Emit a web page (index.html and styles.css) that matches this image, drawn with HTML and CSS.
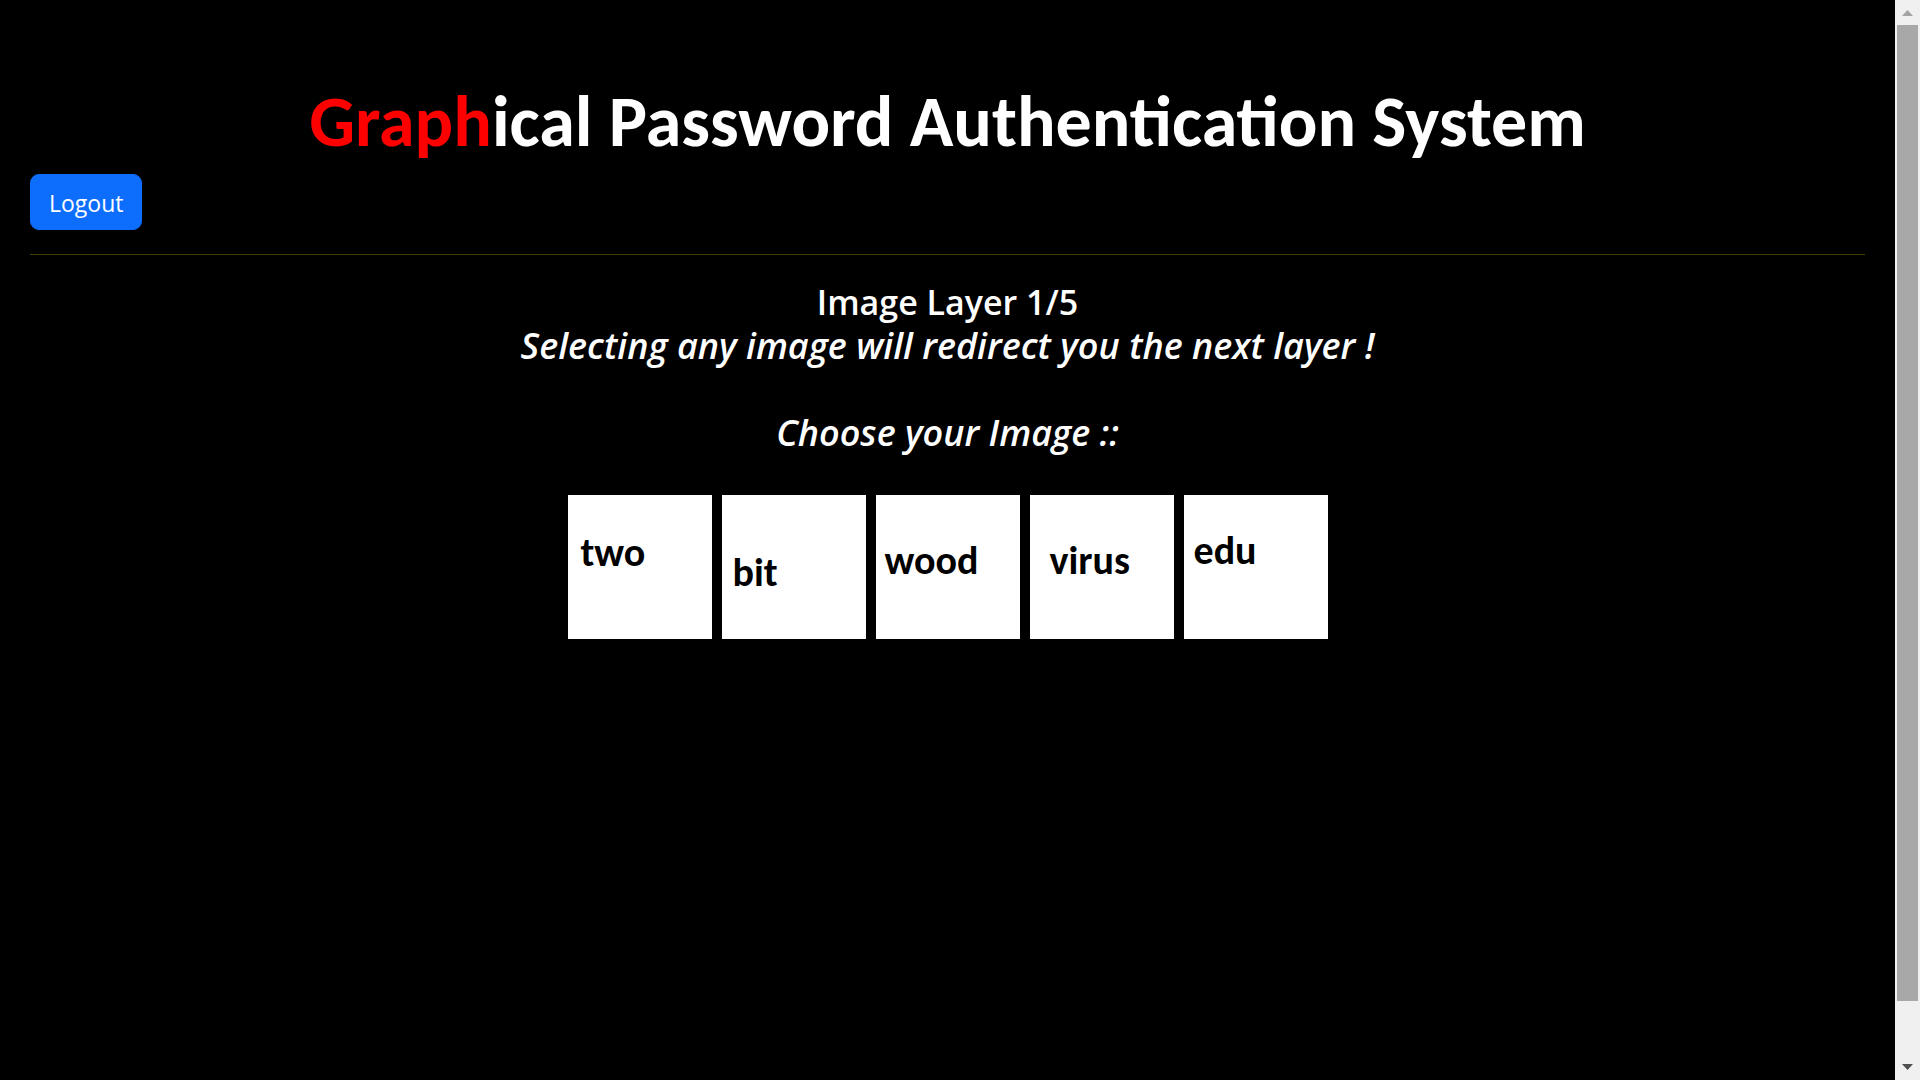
FILE: index.html
```
<!DOCTYPE html>
<html lang="en">
<head>
<meta charset="utf-8">
<title>Graphical Password Authentication System</title>
<link rel="stylesheet" href="styles.css">
</head>
<body>
<div class="window">
  <main class="page">
    <h1 class="title"><span class="accent">Graph</span>ical Password Authentication System</h1>
    <button class="logout" type="button">Logout</button>
    <hr class="rule">
    <section class="layer">
      <h2 class="heading">Image Layer 1/5</h2>
      <p class="note">Selecting any image will redirect you the next layer !</p>
      <p class="note prompt">Choose your Image ::</p>
      <form class="choices">
        <button class="tile tile-two" type="button">two</button>
        <button class="tile tile-bit" type="button">bit</button>
        <button class="tile tile-wood" type="button">wood</button>
        <button class="tile tile-virus" type="button">virus</button>
        <button class="tile tile-edu" type="button">edu</button>
      </form>
    </section>
  </main>
  <div class="scrollbar" aria-hidden="true">
    <svg class="arrow arrow-up" viewBox="0 0 25 25"><path d="M7 16 L12.500 10 L18 16 Z"/></svg>
    <div class="track"><div class="thumb"></div></div>
    <svg class="arrow arrow-down" viewBox="0 0 25 25"><path d="M7 9 L12.500 15 L18 9 Z"/></svg>
  </div>
</div>
</body>
</html>
```
FILE: styles.css
```
* { box-sizing: border-box; }

body {
  margin: 0;
  background: #000;
  color: #fff;
  font-family: "Open Sans", "Noto Sans", sans-serif;
}

.window {
  display: grid;
  grid-template-columns: 1fr 25px;
  min-height: 100vh;
}

.page {
  display: flex;
  flex-direction: column;
  padding: 78px 30px 36px;
}

.title {
  margin: 0;
  font-family: Carlito, Lato, sans-serif;
  font-size: 72px;
  font-weight: 700;
  line-height: 86px;
  text-align: center;
}

.accent { color: #f00; }

.logout {
  align-self: flex-start;
  margin: 10px 0 0;
  padding: 10px 18px 8px;
  border: 1px solid #0d6efd;
  border-radius: 9px;
  background: #0d6efd;
  color: #fff;
  font-family: inherit;
  font-size: 23px;
  line-height: 36px;
}

.rule {
  width: 100%;
  height: 1px;
  margin: 24px 0 26px;
  border: 0;
  background: #404000;
}

.layer {
  display: flex;
  flex-direction: column;
}

.heading,
.note {
  margin: 0;
  font-size: 34px;
  font-weight: 600;
  line-height: 43px;
  text-align: center;
}

.note {
  font-size: 36px;
  font-style: italic;
}

.prompt { margin-top: 44px; }

.choices {
  display: flex;
  justify-content: center;
  gap: 10px;
  margin-top: 41px;
}

.tile {
  display: flex;
  align-items: flex-start;
  width: 144px;
  height: 144px;
  padding: 0;
  border: 0;
  background: #fff;
  color: #000;
  font-family: Carlito, Lato, sans-serif;
  font-size: 40px;
  font-weight: 700;
  line-height: 48px;
}

.tile-two { padding: 34px 0 0 13px; }
.tile-bit { padding: 54px 0 0 11px; }
.tile-wood { padding: 42px 0 0 9px; }
.tile-virus { padding: 42px 0 0 20px; }
.tile-edu { padding: 32px 0 0 10px; }

.scrollbar {
  display: flex;
  flex-direction: column;
  background: #f0f0f0;
}

.arrow {
  width: 25px;
  height: 25px;
}

.arrow-up { fill: #a3a3a3; }
.arrow-down { fill: #505050; }

.track {
  flex: 1;
  display: flex;
  flex-direction: column;
  padding: 0 2px 54px;
}

.thumb {
  flex: 1;
  background: #a8a8a8;
}
```
